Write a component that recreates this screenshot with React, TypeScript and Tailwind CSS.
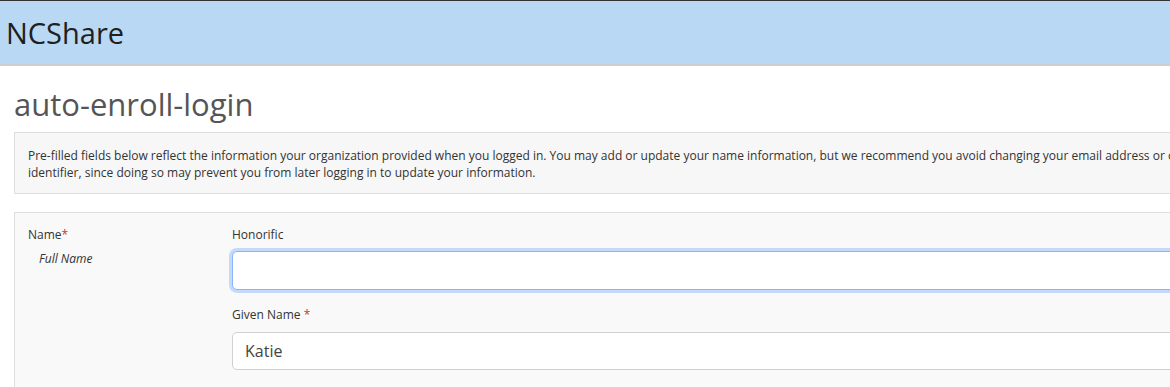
const FONT = "font-['Open_Sans',_'Liberation_Sans',_sans-serif]"

function Required({ spaced }: { spaced?: boolean }) {
  return <span className="text-[#c0392b]">{spaced ? ' *' : '*'}</span>
}

export default function App() {
  return (
    <div className={`w-full h-[387px] overflow-hidden bg-white text-[#333] ${FONT}`}>
      <header className="border-t border-t-[#333] border-b-2 border-b-[#cfcfcf] bg-[#b9d8f4] h-[66px] flex items-center px-[6px]">
        <span className="text-[29px] leading-none text-[#1f1f1f]">NCShare</span>
      </header>

      <main className="w-[1400px] px-[14px]">
        <h1 className="mt-[21px] mb-[10px] text-[31px] leading-[35px] text-[#555]">auto-enroll-login</h1>

        <div className="border border-[#dedede] bg-[#f7f7f7] pl-[13px] pt-[14px] pb-[12px] text-[12px] leading-[17px] text-[#333]">
          <p className="whitespace-nowrap">
            Pre-filled fields below reflect the information your organization provided when you logged in. You may add or
            update your name information, but we recommend you avoid changing your email address or other
          </p>
          <p className="whitespace-nowrap">
            identifier, since doing so may prevent you from later logging in to update your information.
          </p>
        </div>

        <div className="mt-[18px] border border-[#dedede] bg-[#f9f9f9] pt-[13px] pb-6 flex text-[12px] leading-[17px]">
          <div className="w-[217px] shrink-0 pl-[13px]">
            <div>
              Name
              <Required />
            </div>
            <div className="mt-[7px] pl-[11px] italic">Full Name</div>
          </div>

          <div className="flex-1">
            <label className="block">Honorific</label>
            <input
              type="text"
              className="mt-[8px] block w-full h-[39px] rounded-[5px] border border-[#8cb5f5] bg-white shadow-[0_0_0_3px_rgba(13,110,253,0.22)] outline-none"
            />

            <label className="block mt-[16px]">
              Given Name
              <Required spaced />
            </label>
            <input
              type="text"
              defaultValue="Katie"
              className="mt-[9px] block w-full h-[38px] rounded-[5px] border border-[#cfcfd4] bg-white px-[12px] text-[16px] text-[#444] outline-none"
            />
          </div>
        </div>
      </main>
    </div>
  )
}
